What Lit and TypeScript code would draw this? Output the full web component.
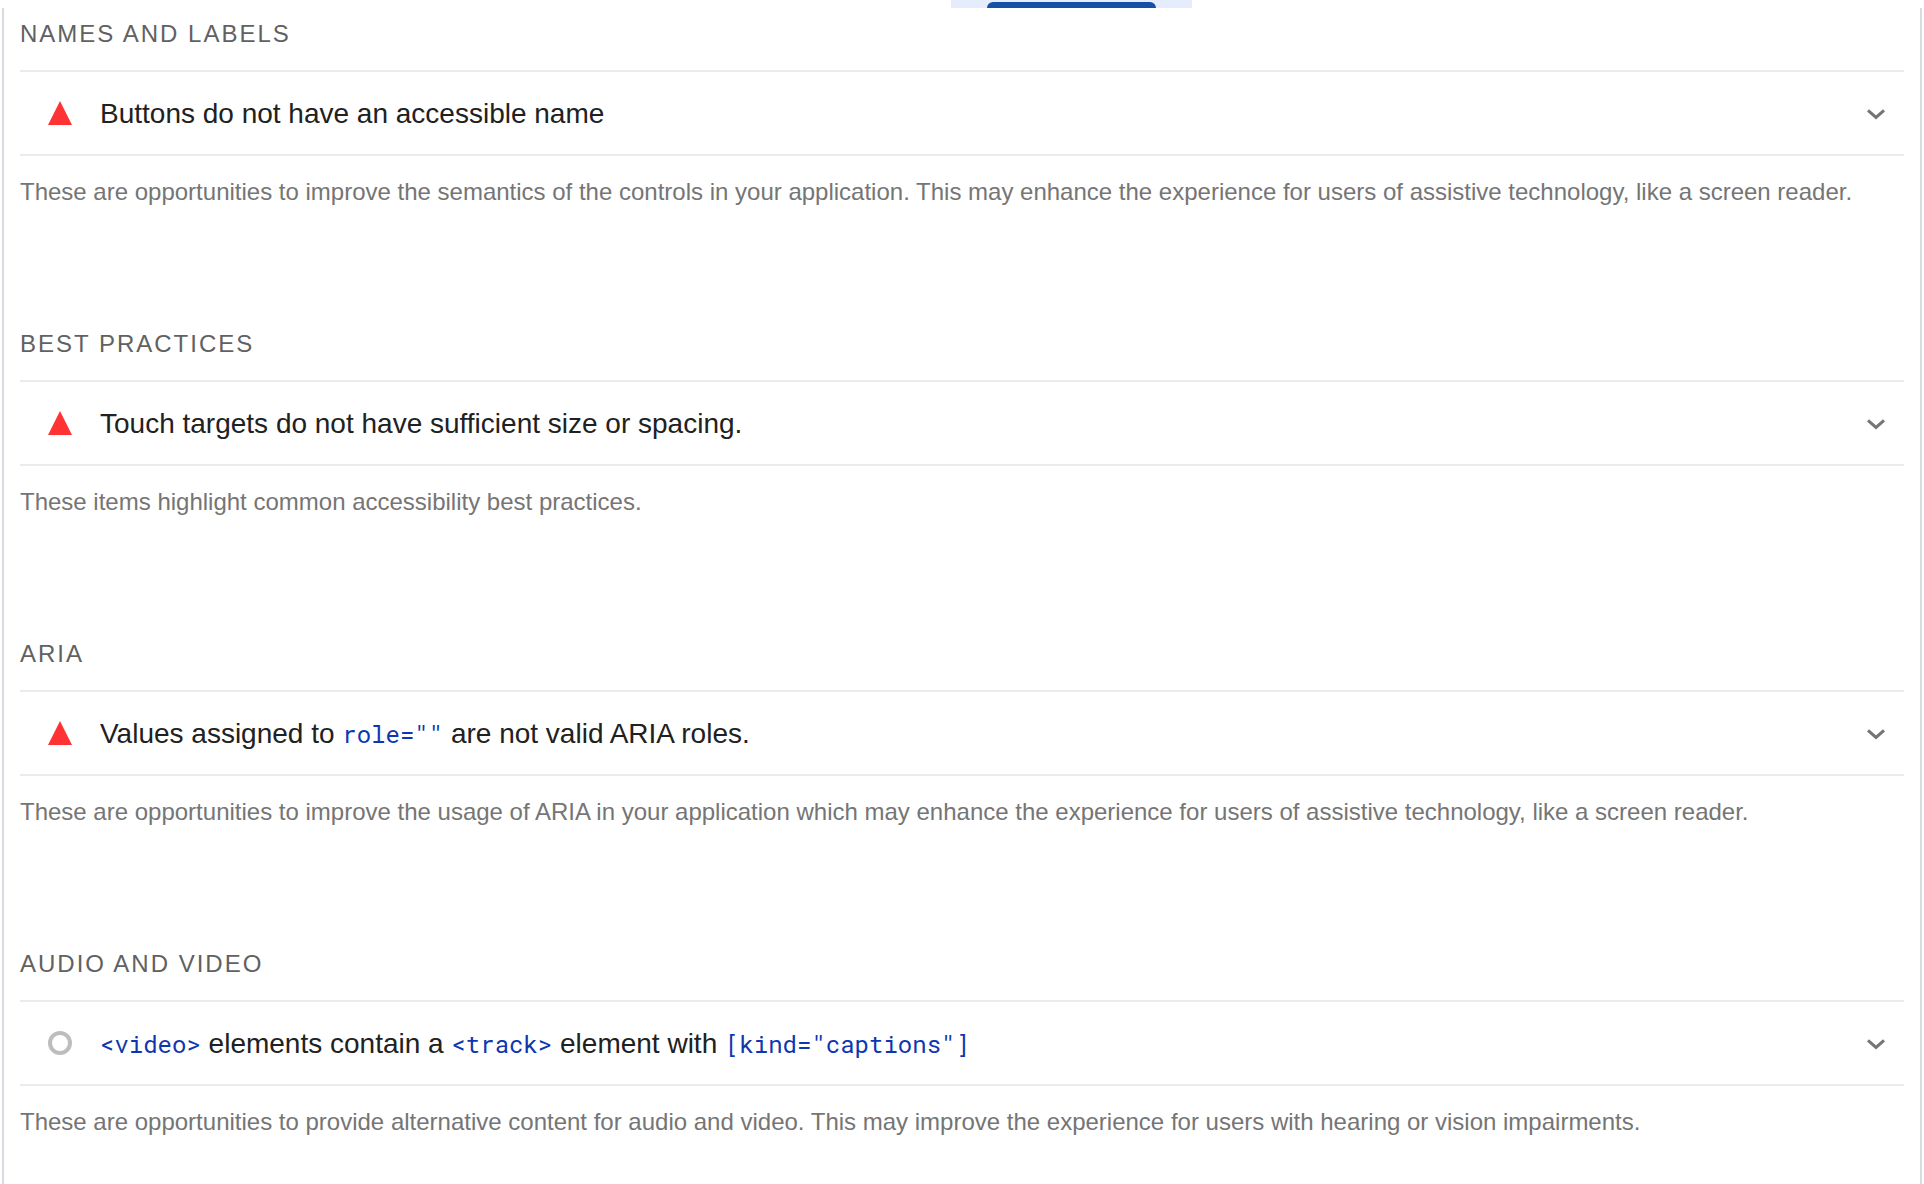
import { LitElement, html, css, svg, TemplateResult } from "lit";
import { customElement, property, state } from "lit/decorators.js";

type Status = "fail" | "manual";

interface AuditGroup {
  heading: string;
  status: Status;
  title: TemplateResult;
  description: string;
}

const groups: AuditGroup[] = [
  {
    heading: "Names and labels",
    status: "fail",
    title: html`Buttons do not have an accessible name`,
    description:
      "These are opportunities to improve the semantics of the controls in your application. This may enhance the experience for users of assistive technology, like a screen reader.",
  },
  {
    heading: "Best practices",
    status: "fail",
    title: html`Touch targets do not have sufficient size or spacing.`,
    description: "These items highlight common accessibility best practices.",
  },
  {
    heading: "ARIA",
    status: "fail",
    title: html`Values assigned to <code>role=""</code> are not valid ARIA roles.`,
    description:
      "These are opportunities to improve the usage of ARIA in your application which may enhance the experience for users of assistive technology, like a screen reader.",
  },
  {
    heading: "Audio and video",
    status: "manual",
    title: html`<code>&lt;video&gt;</code> elements contain a <code>&lt;track&gt;</code> element with <code>[kind="captions"]</code>`,
    description:
      "These are opportunities to provide alternative content for audio and video. This may improve the experience for users with hearing or vision impairments.",
  },
];

const statusShapes = {
  fail: svg`<path d="M12 0 24 24H0Z" fill="#ff3333" />`,
  manual: svg`<circle cx="12" cy="12" r="10" fill="none" stroke="#bdbdbd" stroke-width="4" />`,
};

@customElement("audit-group")
export class AuditGroupElement extends LitElement {
  @property({ attribute: false }) group!: AuditGroup;
  @state() private expanded = false;

  static styles = css`
    :host {
      display: block;
    }
    .heading {
      margin: 0;
      padding-bottom: 20px;
      color: #616161;
      font-size: 24px;
      font-weight: 400;
      line-height: 32px;
      letter-spacing: 2px;
      text-transform: uppercase;
    }
    .audit {
      box-sizing: border-box;
      display: flex;
      align-items: center;
      width: 100%;
      margin: 0;
      padding: 20px 18px 20px 28px;
      border: solid #ebebeb;
      border-width: 2px 0;
      background: none;
      color: #212121;
      font: inherit;
      font-size: 28px;
      line-height: 40px;
      text-align: left;
      cursor: pointer;
    }
    .status {
      flex: none;
      width: 24px;
      height: 24px;
      margin-right: 28px;
    }
    .title {
      flex: 1;
      padding-top: 2px;
    }
    .title code {
      color: #0d37b0;
      font-family: "Roboto Mono", "Liberation Mono", monospace;
      font-size: 24px;
      line-height: 24px;
    }
    .chevron {
      flex: none;
      width: 20px;
      height: 14px;
    }
    .audit[aria-expanded="true"] .chevron {
      transform: rotate(180deg);
    }
    .description {
      margin: 0;
      padding-top: 20px;
      color: #757575;
      font-size: 24px;
      line-height: 32px;
    }
  `;

  private toggle() {
    this.expanded = !this.expanded;
  }

  render() {
    const { heading, status, title, description } = this.group;
    return html`
      <section>
        <h2 class="heading">${heading}</h2>
        <button class="audit" type="button" aria-expanded=${this.expanded} @click=${this.toggle}>
          <svg class="status" viewBox="0 0 24 24" aria-hidden="true">${statusShapes[status]}</svg>
          <span class="title">${title}</span>
          <svg class="chevron" viewBox="0 0 20 14" aria-hidden="true">
            <path d="M2 4.4 10 11.4 18 4.4" fill="none" stroke="#757575" stroke-width="3" />
          </svg>
        </button>
        <p class="description">${description}</p>
      </section>
    `;
  }
}

@customElement("app-root")
export class AppRoot extends LitElement {
  static styles = css`
    :host {
      display: block;
      box-sizing: border-box;
      min-height: 100vh;
      background: #fff;
      font-family: Helvetica, "Liberation Sans", Arial, sans-serif;
    }
    .page {
      display: flex;
      flex-direction: column;
      min-height: 100vh;
    }
    .strip {
      display: grid;
      grid-template-columns: 951fr 241px 732fr;
      height: 8px;
    }
    .tab {
      grid-column: 2;
      display: flex;
      padding: 2px 36px 0;
      background: #e5edfd;
    }
    .indicator {
      flex: 1;
      border-radius: 6px 6px 0 0;
      background: #174ea6;
    }
    .report {
      flex: 1;
      display: flex;
      flex-direction: column;
      gap: 120px;
      margin: 0 2px;
      padding: 10px 16px 32px;
      border: solid #dadbe1;
      border-width: 0 2px;
    }
  `;

  render() {
    return html`
      <div class="page">
        <div class="strip">
          <div class="tab"><span class="indicator"></span></div>
        </div>
        <main class="report">
          ${groups.map((group) => html`<audit-group .group=${group}></audit-group>`)}
        </main>
      </div>
    `;
  }
}
